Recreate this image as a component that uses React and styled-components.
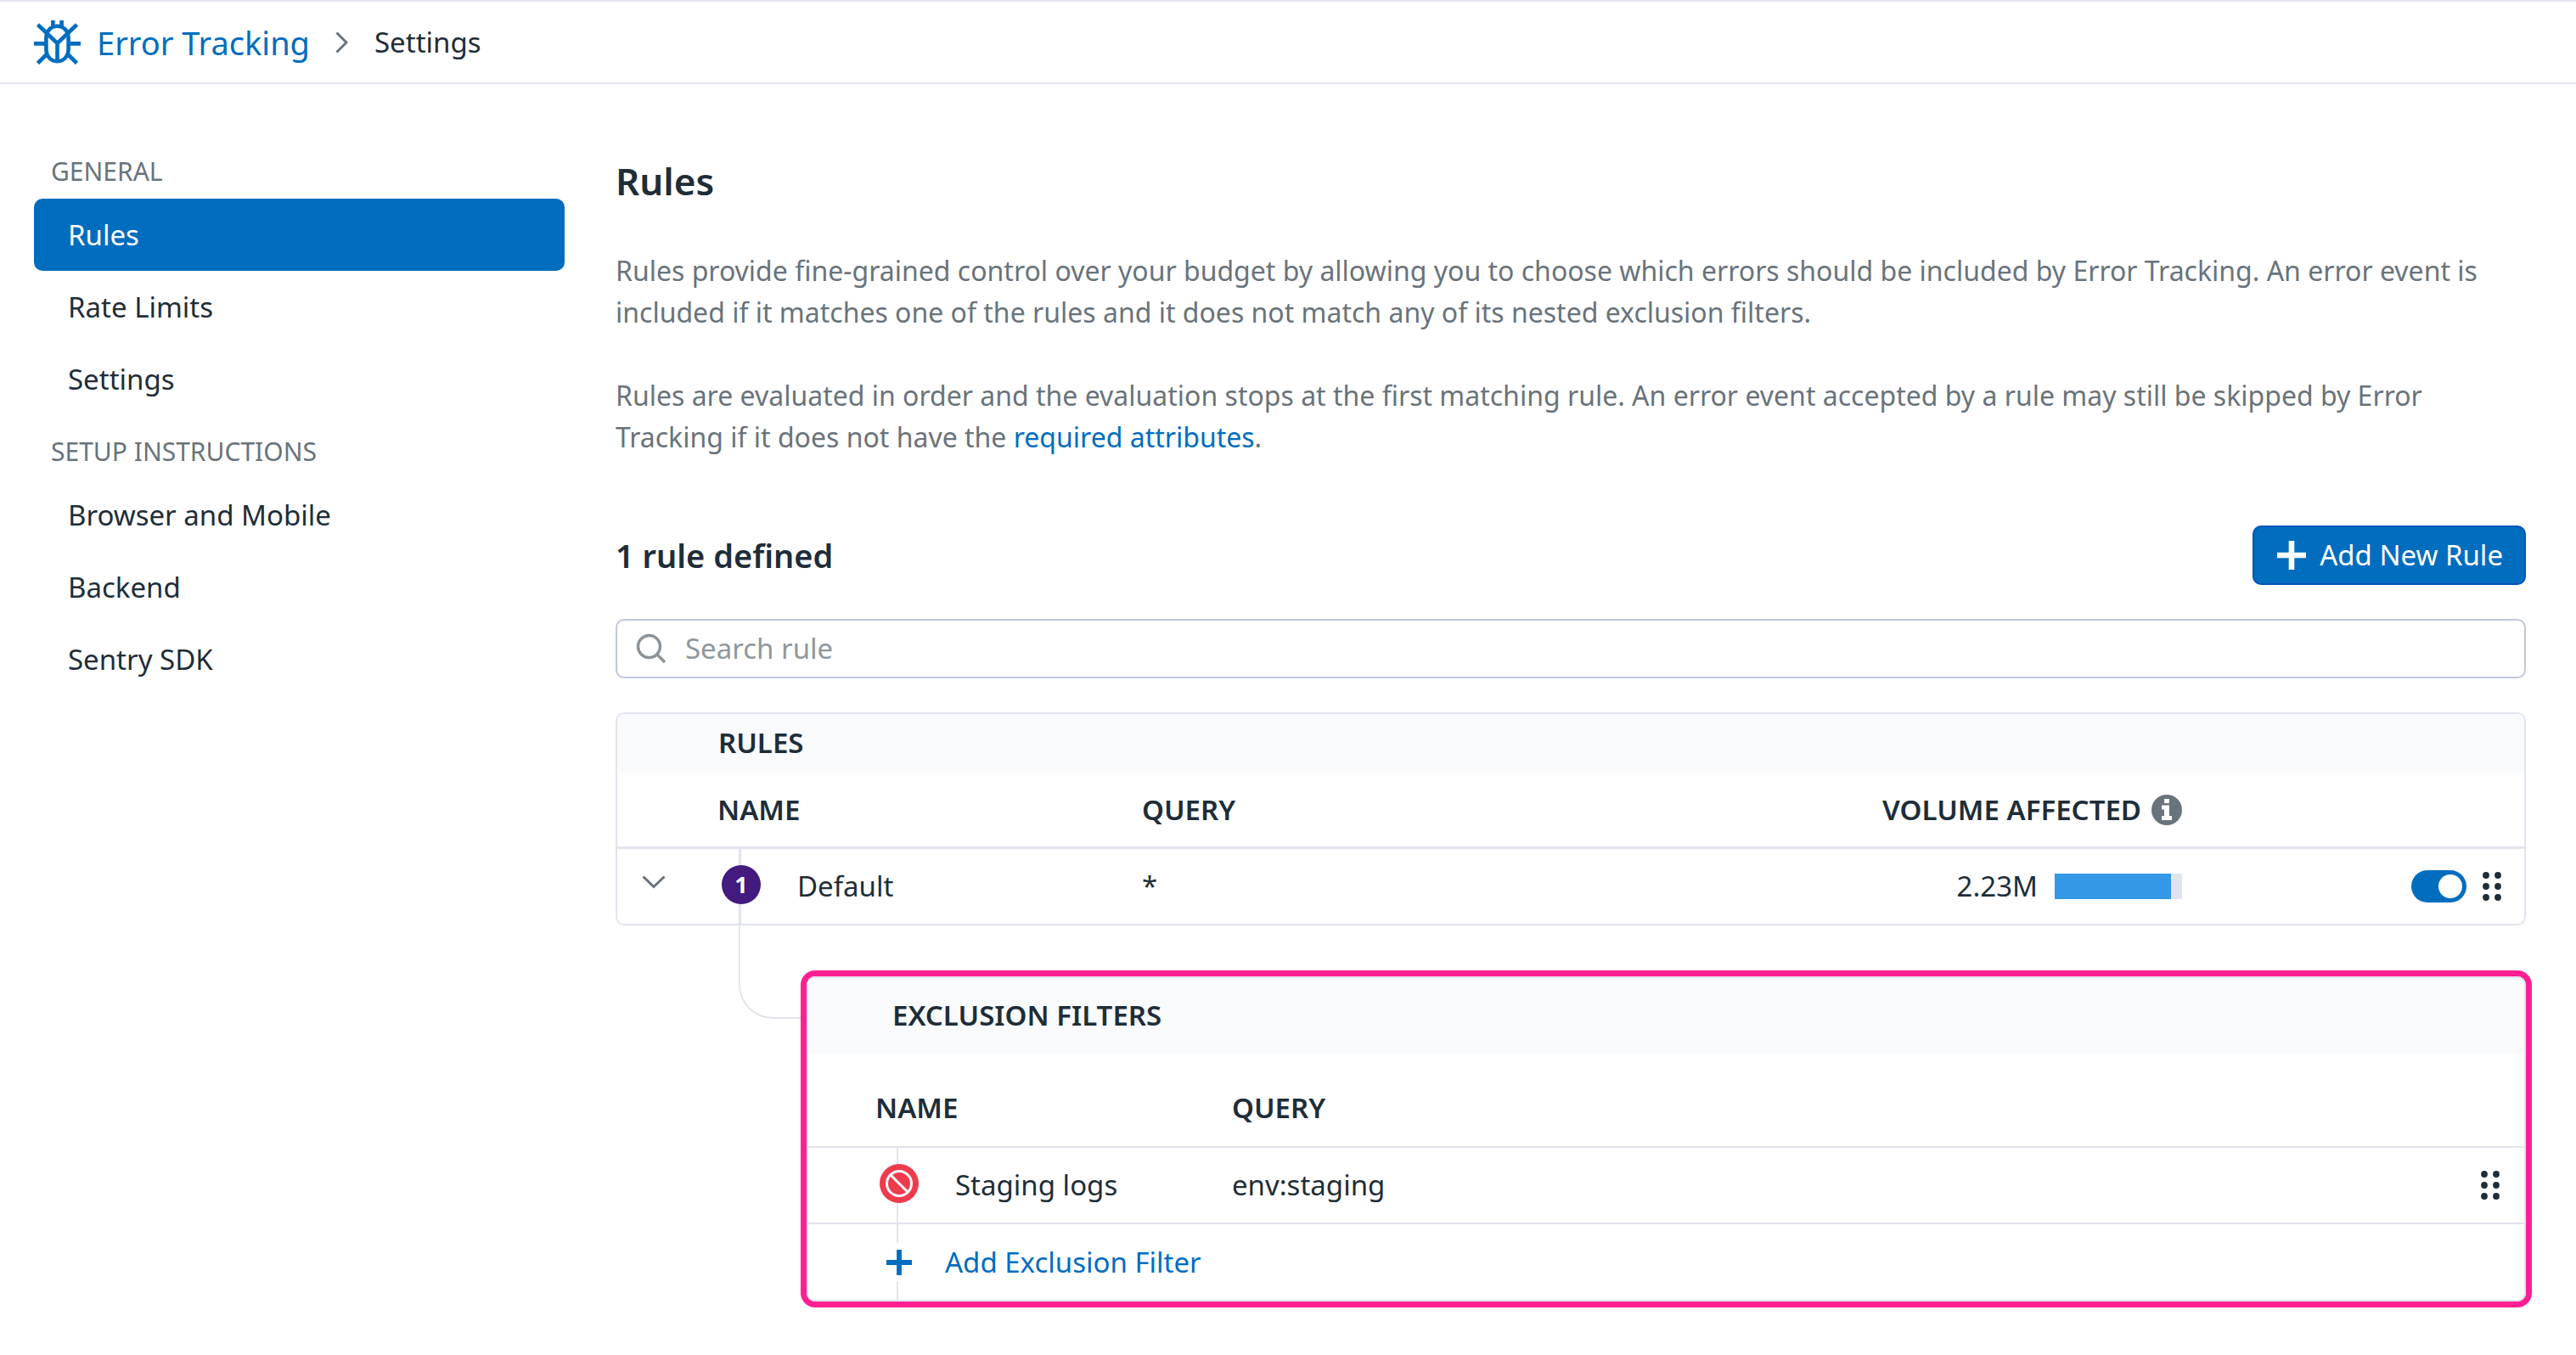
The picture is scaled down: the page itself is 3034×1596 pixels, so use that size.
import React, { useState } from "react";
import styled, { createGlobalStyle, css } from "styled-components";

const color = {
  text: "#1e2d38",
  muted: "#69737b",
  blue: "#006dbf",
  line: "#e1e4ee",
  field: "#c0c6de",
  head: "#f9fafc",
};

const GlobalStyle = createGlobalStyle`
  *, *::before, *::after { box-sizing: border-box; }
  body {
    margin: 0;
    background: #fff;
    color: ${color.text};
    font-family: "Noto Sans", "Open Sans", sans-serif;
    font-size: 33px;
    line-height: 48px;
  }
  h1, h2, h3, p, ul { margin: 0; padding: 0; }
  button, input { font: inherit; color: inherit; }
  svg { display: block; flex: none; }
`;

const TopBar = styled.header`
  border: solid ${color.line};
  border-width: 2px 0;
  padding: 0 40px;
`;

const Breadcrumb = styled.nav`
  display: flex;
  align-items: center;
  min-height: 95px;
`;

const ProductLink = styled.a`
  display: flex;
  align-items: center;
  gap: 19px;
  color: ${color.blue};
  font-size: 38px;
  text-decoration: none;
`;

const Separator = styled.span`
  padding: 0 31px 0 30px;
`;

const Body = styled.div`
  display: flex;
  align-items: flex-start;
  gap: 60px;
  padding: 60px 59px 56px 40px;
`;

const Sidebar = styled.nav`
  flex: none;
  width: 625px;
`;

const NavHeading = styled.h2`
  padding: 19px 20px 8px;
  color: ${color.muted};
  font-size: 30px;
  font-weight: 400;
`;

const NavList = styled.ul`
  list-style: none;
`;

const NavLink = styled.a`
  display: flex;
  align-items: center;
  min-height: 85px;
  padding: 0 40px;
  border-radius: 10px;
  color: ${(p) => (p.$active ? "#fff" : color.text)};
  background: ${(p) => (p.$active ? color.blue : "transparent")};
  text-decoration: none;
`;

const Main = styled.main`
  flex: 1;
  min-width: 0;
  padding-top: 24px;
`;

const Title = styled.h1`
  font-size: 44px;
  font-weight: 600;
  line-height: 60px;
`;

const Intro = styled.div`
  display: grid;
  gap: 49px;
  padding: 51px 0 80px;
  color: ${color.muted};
  font-size: 32px;
  line-height: 49px;
`;

const TextLink = styled.a`
  color: ${color.blue};
  text-decoration: none;
`;

const Summary = styled.div`
  display: flex;
  align-items: center;
  justify-content: space-between;
`;

const Count = styled.h2`
  font-size: 38px;
  font-weight: 600;
`;

const PrimaryButton = styled.button`
  display: flex;
  align-items: center;
  gap: 16px;
  height: 70px;
  padding: 0 25px 0 27px;
  border: 2px solid #0053ba;
  border-radius: 10px;
  color: #fff;
  background: ${color.blue};
`;

const SearchBox = styled.label`
  display: flex;
  align-items: center;
  gap: 22px;
  height: 70px;
  margin: 40px 0;
  padding: 0 22px;
  border: 2px solid ${color.field};
  border-radius: 10px;
`;

const SearchInput = styled.input`
  flex: 1;
  min-width: 0;
  padding: 0;
  border: 0;
  outline: 0;
  background: none;
  &::placeholder {
    color: #8e979b;
    opacity: 1;
  }
`;

const Panel = styled.section`
  border: 2px solid ${color.line};
  border-radius: 10px;
`;

const PanelHeading = styled.h3`
  display: flex;
  align-items: center;
  min-height: ${(p) => (p.$nested ? 89 : 69)}px;
  padding: 0 0 2px ${(p) => (p.$nested ? 99 : 119)}px;
  border-radius: 8px 8px 0 0;
  background: ${color.head};
  font-size: 33px;
  font-weight: 600;
`;

const HighlightedPanel = styled(Panel)`
  position: relative;
  margin: 60px 0 0 225px;
  box-shadow: 0 0 0 7px #ff1f93;
  &::before {
    content: "";
    position: absolute;
    left: -82px;
    top: -62px;
    width: 73px;
    height: 110px;
    border: solid ${color.line};
    border-width: 0 0 2px 2px;
    border-bottom-left-radius: 40px;
  }
`;

const Table = styled.table`
  width: 100%;
  table-layout: fixed;
  border-collapse: separate;
  border-spacing: 0;
`;

const Col = styled.col`
  width: ${(p) => (p.$width ? `${p.$width}px` : "auto")};
`;

const HeadCell = styled.th`
  height: ${(p) => (p.$nested ? 111 : 90)}px;
  padding: ${(p) => (p.$nested ? "18px 0 0" : "0")};
  border-bottom: ${(p) => (p.$nested ? 2 : 3)}px solid ${color.line};
  font-size: 33px;
  font-weight: 600;
  text-align: left;
`;

const Cell = styled.td`
  height: 88px;
  padding: 0;
`;

const rail = css`
  position: relative;
  &::before {
    content: "";
    position: absolute;
    left: 25px;
    top: 0;
    bottom: 0;
    width: ${(p) => (p.$nested ? 2 : 3)}px;
    background: ${color.line};
  }
`;

const RailCell = styled(Cell)`
  ${rail}
`;

const NameGroup = styled.div`
  position: relative;
  display: flex;
  align-items: center;
  gap: 43px;
  padding-left: 5px;
`;

const Marker = styled.span`
  display: flex;
  align-items: center;
  justify-content: center;
  width: 46px;
  height: 46px;
  margin-bottom: 4px;
  border-radius: 50%;
  color: #fff;
  background: ${(p) => (p.$excluded ? "#ee3b4e" : "#431a7e")};
  font-size: 27px;
  font-weight: 700;
`;

const EndGroup = styled.div`
  display: flex;
  align-items: center;
  justify-content: flex-end;
  gap: ${(p) => p.$gap || 0}px;
  padding-right: ${(p) => p.$inset || 0}px;
`;

const Bar = styled.div`
  width: 150px;
  height: 30px;
  background: ${color.line};
`;

const BarFill = styled.div`
  height: 100%;
  background: #3398e6;
`;

const IconButton = styled.button`
  display: flex;
  padding: 0;
  border: 0;
  background: none;
`;

const ExpandButton = styled(IconButton)`
  padding: 0 0 10px 29px;
`;

const Switch = styled.input`
  appearance: none;
  display: flex;
  align-items: center;
  justify-content: ${(p) => (p.checked ? "flex-end" : "flex-start")};
  width: 65px;
  height: 38px;
  margin: 0;
  padding: 0 5px;
  border-radius: 19px;
  background: ${(p) => (p.checked ? color.blue : color.field)};
  &::before {
    content: "";
    width: 28px;
    height: 28px;
    border-radius: 50%;
    background: #fff;
  }
`;

const AddRow = styled.div`
  display: flex;
  padding-left: 79px;
  border-top: 2px solid ${color.line};
`;

const AddRail = styled.div`
  ${rail}
  display: flex;
  align-items: center;
  min-height: 89px;
`;

const AddButton = styled.button`
  position: relative;
  display: flex;
  align-items: center;
  gap: 26px;
  padding: 0;
  border: 0;
  background: none;
  color: ${color.blue};
`;

const PlusBacking = styled.span`
  display: flex;
  align-items: center;
  justify-content: center;
  width: 56px;
  height: 45px;
  background: #fff;
`;

const BugIcon = () => (
  <svg width="55" height="52" viewBox="10 12 55 52" fill="none" stroke={color.blue} strokeWidth="4.6" aria-hidden="true">
    <path d="M32.4 12v7M42.6 12v7" />
    <path d="M24.4 33c0-8.500 5.600-14.300 13.100-14.300s13.100 5.800 13.100 14.300v13c0 8.500-5.600 14.200-13.100 14.200S24.400 54.500 24.400 46z" />
    <path d="M14.500 17l23 22 23-22M37.500 38v22" />
    <path d="M10 39.400h14.500M50.500 39.400H65M14.500 62.500l11.500-11.500M60.500 62.500 49 51" />
  </svg>
);

const ChevronRight = () => (
  <svg width="15" height="26" viewBox="0 0 15 26" fill="none" stroke={color.muted} strokeWidth="3" aria-hidden="true">
    <path d="M1.500 1.500 13 13 1.500 24.500" />
  </svg>
);

const ChevronDown = () => (
  <svg width="28" height="16" viewBox="0 0 28 16" fill="none" stroke={color.muted} strokeWidth="3" aria-hidden="true">
    <path d="M1.500 1.500 14 13.500 26.500 1.500" />
  </svg>
);

const PlusIcon = ({ size }) => (
  <svg width={size} height={size} viewBox="0 0 34 34" aria-hidden="true">
    <path d="M13.700 0h6.600v13.700H34v6.600H20.300V34h-6.600V20.300H0v-6.600h13.700z" fill="currentColor" />
  </svg>
);

const SearchIcon = () => (
  <svg width="36" height="36" viewBox="0 0 36 36" fill="none" stroke="#8a9397" strokeWidth="3.400" aria-hidden="true">
    <circle cx="15.500" cy="15.500" r="13" />
    <path d="M24.500 24.500 34 34" />
  </svg>
);

const InfoIcon = () => (
  <svg width="36" height="36" viewBox="0 0 36 36" aria-hidden="true">
    <circle cx="18" cy="18" r="18" fill={color.muted} />
    <path d="M15 5h6v5h-6zM12 12.500h9V25h3v5H12v-5h3v-7.500h-3z" fill="#fff" />
  </svg>
);

const GripIcon = () => (
  <svg width="22" height="34" viewBox="0 0 22 34" fill={color.text} aria-hidden="true">
    {[4, 17, 30].map((y) => (
      <g key={y}>
        <circle cx="4" cy={y} r="3.900" />
        <circle cx="18" cy={y} r="3.900" />
      </g>
    ))}
  </svg>
);

const BlockIcon = () => (
  <svg width="32" height="32" viewBox="0 0 32 32" fill="none" stroke="#fff" strokeWidth="3" aria-hidden="true">
    <circle cx="16" cy="16" r="14.500" />
    <path d="M6 6l20 20" />
  </svg>
);

const navigation = [
  { title: "GENERAL", items: ["Rules", "Rate Limits", "Settings"] },
  { title: "SETUP INSTRUCTIONS", items: ["Browser and Mobile", "Backend", "Sentry SDK"] },
];

const DragHandle = () => (
  <IconButton type="button" aria-label="Reorder">
    <GripIcon />
  </IconButton>
);

export default function App() {
  const [enabled, setEnabled] = useState(true);
  const [query, setQuery] = useState("");
  const volumeShare = 91;

  return (
    <>
      <GlobalStyle />
      <TopBar>
        <Breadcrumb aria-label="Breadcrumb">
          <ProductLink href="#error-tracking">
            <BugIcon />
            Error Tracking
          </ProductLink>
          <Separator>
            <ChevronRight />
          </Separator>
          <span>Settings</span>
        </Breadcrumb>
      </TopBar>
      <Body>
        <Sidebar aria-label="Settings">
          {navigation.map((group) => (
            <section key={group.title}>
              <NavHeading>{group.title}</NavHeading>
              <NavList>
                {group.items.map((item) => (
                  <li key={item}>
                    <NavLink href="#" $active={item === "Rules"}>
                      {item}
                    </NavLink>
                  </li>
                ))}
              </NavList>
            </section>
          ))}
        </Sidebar>
        <Main>
          <Title>Rules</Title>
          <Intro>
            <p>
              Rules provide fine-grained control over your budget by allowing you to choose which errors should be
              included by Error Tracking. An error event is included if it matches one of the rules and it does not
              match any of its nested exclusion filters.
            </p>
            <p>
              Rules are evaluated in order and the evaluation stops at the first matching rule. An error event accepted
              by a rule may still be skipped by Error Tracking if it does not have the{" "}
              <TextLink href="#attributes">required attributes</TextLink>.
            </p>
          </Intro>
          <Summary>
            <Count>1 rule defined</Count>
            <PrimaryButton type="button">
              <PlusIcon size={34} />
              Add New Rule
            </PrimaryButton>
          </Summary>
          <SearchBox>
            <SearchIcon />
            <SearchInput
              aria-label="Search rule"
              placeholder="Search rule"
              value={query}
              onChange={(e) => setQuery(e.target.value)}
            />
          </SearchBox>
          <Panel>
            <PanelHeading>RULES</PanelHeading>
            <Table>
              <colgroup>
                <Col $width={118} />
                <Col $width={500} />
                <Col />
                <Col $width={440} />
                <Col $width={403} />
              </colgroup>
              <thead>
                <tr>
                  <HeadCell />
                  <HeadCell scope="col">NAME</HeadCell>
                  <HeadCell scope="col">QUERY</HeadCell>
                  <HeadCell scope="col">
                    <EndGroup $gap={12}>
                      VOLUME AFFECTED
                      <InfoIcon />
                    </EndGroup>
                  </HeadCell>
                  <HeadCell />
                </tr>
              </thead>
              <tbody>
                <tr>
                  <Cell>
                    <ExpandButton type="button" aria-label="Collapse rule" aria-expanded="true">
                      <ChevronDown />
                    </ExpandButton>
                  </Cell>
                  <RailCell>
                    <NameGroup>
                      <Marker>1</Marker>
                      Default
                    </NameGroup>
                  </RailCell>
                  <Cell>*</Cell>
                  <Cell>
                    <EndGroup $gap={20}>
                      2.23M
                      <Bar>
                        <BarFill style={{ width: `${volumeShare}%` }} />
                      </Bar>
                    </EndGroup>
                  </Cell>
                  <Cell>
                    <EndGroup $gap={19} $inset={27}>
                      <Switch
                        type="checkbox"
                        role="switch"
                        aria-label="Enable Default"
                        checked={enabled}
                        onChange={(e) => setEnabled(e.target.checked)}
                      />
                      <DragHandle />
                    </EndGroup>
                  </Cell>
                </tr>
              </tbody>
            </Table>
          </Panel>
          <HighlightedPanel>
            <PanelHeading $nested>EXCLUSION FILTERS</PanelHeading>
            <Table>
              <colgroup>
                <Col $width={79} />
                <Col $width={420} />
                <Col />
                <Col $width={120} />
              </colgroup>
              <thead>
                <tr>
                  <HeadCell $nested />
                  <HeadCell $nested scope="col">NAME</HeadCell>
                  <HeadCell $nested scope="col">QUERY</HeadCell>
                  <HeadCell $nested />
                </tr>
              </thead>
              <tbody>
                <tr>
                  <Cell />
                  <RailCell $nested>
                    <NameGroup>
                      <Marker $excluded>
                        <BlockIcon />
                      </Marker>
                      Staging logs
                    </NameGroup>
                  </RailCell>
                  <Cell>env:staging</Cell>
                  <Cell>
                    <EndGroup $inset={29}>
                      <DragHandle />
                    </EndGroup>
                  </Cell>
                </tr>
              </tbody>
            </Table>
            <AddRow>
              <AddRail $nested>
                <AddButton type="button">
                  <PlusBacking>
                    <PlusIcon size={30} />
                  </PlusBacking>
                  Add Exclusion Filter
                </AddButton>
              </AddRail>
            </AddRow>
          </HighlightedPanel>
        </Main>
      </Body>
    </>
  );
}
